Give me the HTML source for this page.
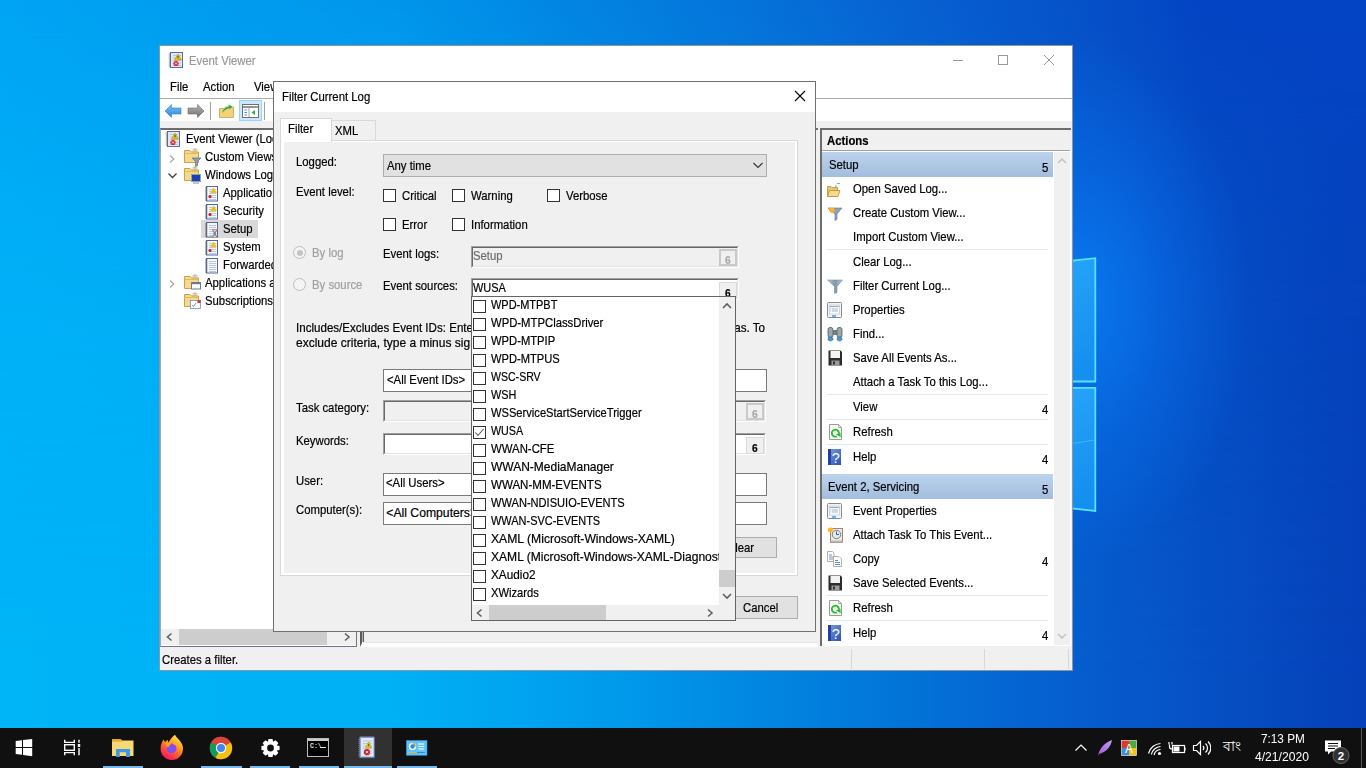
<!DOCTYPE html>
<html><head><meta charset="utf-8">
<style>
*{margin:0;padding:0;box-sizing:border-box}
html,body{width:1366px;height:768px;overflow:hidden}
body{position:relative;font-family:"Liberation Sans",sans-serif;font-size:11.4px;color:#000;
background:linear-gradient(90deg,#00a4f4 0%,#0096ec 29%,#0670d8 57%,#0862d2 66%,#0650c8 80%,#0444c4 88%,#0444c6 100%)}
.a{position:absolute}
.t{position:absolute;font-size:12.2px;line-height:15.5px;margin-left:-.7px;white-space:nowrap;color:#000;transform:scaleX(.93);transform-origin:0 0;-webkit-text-stroke:.2px}
.bx{position:absolute;background:#fff;border:1px solid #7a7a7a}
.sunk{position:absolute;border-top:1px solid #a0a0a0;border-left:1px solid #a0a0a0;border-bottom:1px solid #fff;border-right:1px solid #fff}
.sunk>i{position:absolute;left:0;top:0;right:0;bottom:0;border-top:1px solid #696969;border-left:1px solid #696969;border-bottom:1px solid #e3e3e3;border-right:1px solid #e3e3e3}
.cb{position:absolute;width:13px;height:13px;border:1px solid #333;background:#fff}
.sep{position:absolute;height:1px;background:#e8e8e8}
</style></head><body>

<!-- desktop glow -->
<div class="a" style="left:0;top:0;width:1366px;height:728px;background:linear-gradient(90deg,#00b4f8 0%,#00b0f5 29%,#009cec 44%,#0274d8 66%,#0660d0 77%,#0540b8 100%);-webkit-mask-image:linear-gradient(180deg,transparent 0%,rgba(0,0,0,.55) 27%,rgba(0,0,0,.8) 47%,#000 93%)"></div>
<div class="a" style="left:0;top:0;width:1366px;height:728px;background:radial-gradient(ellipse 170px 260px at 1080px 300px,rgba(10,130,250,.75),rgba(10,120,245,.35) 55%,rgba(10,110,240,0) 100%)"></div>
<!-- windows logo panes -->
<svg class="a" style="left:1050px;top:250px" width="60" height="270"><defs><linearGradient id="lp" x1="0" y1="0" x2="0.3" y2="1"><stop offset="0" stop-color="#28a6fa"/><stop offset="1" stop-color="#1690f0"/></linearGradient></defs><path d="M0 13L45.3 8.2V131.5H0Z" fill="url(#lp)" stroke="#55e2ff" stroke-width="1.8"/><path d="M0 137.8H45.3V261L0 256Z" fill="url(#lp)" stroke="#55e2ff" stroke-width="1.8"/><path d="M0 197L45 190" stroke="#6ad0ff" stroke-width="1" opacity=".5"/></svg>
<!-- ============ EVENT VIEWER WINDOW ============ -->
<div class="a" id="win" style="left:159px;top:45px;width:914px;height:626px;background:#fff;border:1px solid rgba(0,20,50,.45)"></div>
<!-- menu separator -->
<div class="a" style="left:160px;top:98px;width:912px;height:1px;background:#a9a9a9"></div>
<!-- gray client area -->
<div class="a" style="left:160px;top:121px;width:912px;height:549px;background:#f0f0f0"></div>

<!-- tree pane -->
<div class="a" style="left:160px;top:128px;width:197px;height:519px;background:#fff;border-top:2px solid #6d6d6d;border-right:1px solid #6d7585;border-bottom:1px solid #6d7585;border-left:1px solid #a0a8b0"></div>

<!-- middle pane -->
<div class="a" style="left:360px;top:128px;width:458px;height:519px;background:#f0f0f0;border-left:2px solid #5a5a5a;border-top:2px solid #6d6d6d;border-bottom:4px solid #fff"></div>
<div class="a" style="left:362px;top:130px;width:1px;height:512px;background:#b0b0b0"></div>
<div class="a" style="left:363px;top:130px;width:1px;height:512px;background:#5a5a5a"></div>
<div class="a" style="left:364px;top:642px;width:454px;height:1px;background:#e3e3e3"></div>

<!-- actions pane -->
<div class="a" style="left:820px;top:128px;width:251px;height:518px;background:#fff;border-left:2px solid #6d6d6d;border-top:2px solid #6d6d6d"></div>

<!-- status bar -->
<div class="a" style="left:160px;top:647px;width:912px;height:23px;background:#f0f0f0"></div>

<div class="t" style="left:189.5px;top:54px;color:#999">Event Viewer</div>
<div class="a" style="left:953px;top:60px;width:10px;height:1px;background:#999"></div>
<div class="a" style="left:998px;top:55px;width:10px;height:10px;border:1px solid #999"></div>
<svg class="a" style="left:1043px;top:54px" width="12" height="12"><path d="M1 1L11 11M11 1L1 11" stroke="#999" stroke-width="1"/></svg>
<div class="t" style="left:170.5px;top:80px;">File</div>
<div class="t" style="left:204px;top:80px;">Action</div>
<div class="t" style="left:255px;top:80px;">View</div>
<div class="a" style="left:201px;top:220px;width:57px;height:18px;background:#d9d9d9"></div>
<div class="t" style="left:186.6px;top:132px;">Event Viewer (Local)</div>
<div class="t" style="left:205.5px;top:150px;">Custom Views</div>
<div class="t" style="left:205.5px;top:168px;">Windows Logs</div>
<div class="t" style="left:224px;top:186px;">Application</div>
<div class="t" style="left:224px;top:204px;">Security</div>
<div class="t" style="left:224px;top:222px;">Setup</div>
<div class="t" style="left:224px;top:240px;">System</div>
<div class="t" style="left:224px;top:258px;">Forwarded Events</div>
<div class="t" style="left:205.5px;top:276px;">Applications and Services Logs</div>
<div class="t" style="left:205.5px;top:294px;">Subscriptions</div>
<div class="t" style="left:162.6px;top:653px;">Creates a filter.</div>
<div class="a" style="left:851px;top:649px;width:1px;height:20px;background:#d7d7d7"></div>
<div class="a" style="left:984px;top:649px;width:1px;height:20px;background:#d7d7d7"></div>
<div class="a" style="left:1068px;top:649px;width:1px;height:20px;background:#d7d7d7"></div>
<div class="a" style="left:161px;top:629px;width:195px;height:16px;background:#f0f0f0"></div>
<div class="a" style="left:179px;top:629px;width:148px;height:16px;background:#cdcdcd"></div>
<svg class="a" style="left:165px;top:632px" width="10" height="10"><path d="M6.5 1.5L2.5 5L6.5 8.5" stroke="#606060" stroke-width="1.6" fill="none"/></svg>
<svg class="a" style="left:342px;top:632px" width="10" height="10"><path d="M3 1.5L7 5L3 8.5" stroke="#606060" stroke-width="1.6" fill="none"/></svg>
<div class="a" style="left:822px;top:130px;width:249px;height:20px;background:#f0f0f0"></div>
<div class="a" style="left:822px;top:150px;width:248px;height:1px;background:#a0a0a0"></div>
<div class="t" style="left:827.7px;top:134px;font-weight:bold">Actions</div>
<div class="a" style="left:1054px;top:152px;width:16px;height:493px;background:#f0f0f0"></div>
<svg class="a" style="left:1056px;top:156px" width="12" height="10"><path d="M2 7L6 3L10 7" stroke="#c0c0c0" stroke-width="1.4" fill="none"/></svg>
<svg class="a" style="left:1056px;top:631px" width="12" height="10"><path d="M2 3L6 7L10 3" stroke="#c0c0c0" stroke-width="1.4" fill="none"/></svg>
<div class="a" style="left:822px;top:152px;width:231px;height:25px;background:linear-gradient(180deg,#bcd3ec,#a2bddd)"></div>
<div class="t" style="left:829.4px;top:158px;">Setup</div>
<div class="t" style="left:1043px;top:161px;">5</div>
<div class="a" style="left:822px;top:474px;width:231px;height:25px;background:linear-gradient(180deg,#bcd3ec,#a2bddd)"></div>
<div class="t" style="left:829.1px;top:480px;">Event 2, Servicing</div>
<div class="t" style="left:1043px;top:483px;">5</div>
<div class="t" style="left:853.5px;top:182px;">Open Saved Log...</div>
<div class="t" style="left:853.5px;top:206px;">Create Custom View...</div>
<div class="t" style="left:853.5px;top:230px;">Import Custom View...</div>
<div class="t" style="left:853.5px;top:255px;">Clear Log...</div>
<div class="t" style="left:853.5px;top:279px;">Filter Current Log...</div>
<div class="t" style="left:853.5px;top:303px;">Properties</div>
<div class="t" style="left:853.5px;top:327px;">Find...</div>
<div class="t" style="left:853.5px;top:351px;">Save All Events As...</div>
<div class="t" style="left:853.5px;top:375px;">Attach a Task To this Log...</div>
<div class="t" style="left:853.5px;top:400px;">View</div>
<div class="t" style="left:853.5px;top:425px;">Refresh</div>
<div class="t" style="left:853.5px;top:450px;">Help</div>
<div class="t" style="left:853.5px;top:504px;">Event Properties</div>
<div class="t" style="left:853.5px;top:528px;">Attach Task To This Event...</div>
<div class="t" style="left:853.5px;top:552px;">Copy</div>
<div class="t" style="left:853.5px;top:576px;">Save Selected Events...</div>
<div class="t" style="left:853.5px;top:601px;">Refresh</div>
<div class="t" style="left:853.5px;top:626px;">Help</div>
<div class="t" style="left:1042.5px;top:403px;">4</div>
<div class="t" style="left:1042.5px;top:453px;">4</div>
<div class="t" style="left:1042.5px;top:555px;">4</div>
<div class="t" style="left:1042.5px;top:629px;">4</div>
<div class="sep" style="left:827px;top:249px;width:221px"></div>
<div class="sep" style="left:827px;top:394px;width:221px"></div>
<div class="sep" style="left:827px;top:419px;width:221px"></div>
<div class="sep" style="left:827px;top:444px;width:221px"></div>
<div class="sep" style="left:827px;top:595px;width:221px"></div>
<div class="sep" style="left:827px;top:620px;width:221px"></div>
<svg class="a" style="left:168px;top:52px" width="16" height="16"><rect x="2.5" y="0.5" width="12" height="15" fill="#dfe8f5" stroke="#5b6fa0" stroke-width="1"/><path d="M5 3.5H13M5 6H13M5 8.5H13M5 11H13M5 13.5H13" stroke="#a9bde0" stroke-width="0.8"/><path d="M0.8 2H3M0.8 4H3M0.8 6H3M0.8 8H3M0.8 10H3M0.8 12H3M0.8 14H3" stroke="#666" stroke-width="0.9"/><path d="M10 2L13.5 8H6.5Z" fill="#f5c400" stroke="#8a7000" stroke-width="0.4"/><path d="M10 4V6.3" stroke="#333" stroke-width="0.9"/><circle cx="8" cy="11.5" r="2.6" fill="#d8232a"/><path d="M7 10.5L9 12.5M9 10.5L7 12.5" stroke="#fff" stroke-width="0.8"/></svg>
<svg class="a" style="left:165px;top:131px" width="16" height="16"><rect x="2.5" y="0.5" width="12" height="15" fill="#dfe8f5" stroke="#5b6fa0" stroke-width="1"/><path d="M5 3.5H13M5 6H13M5 8.5H13M5 11H13M5 13.5H13" stroke="#a9bde0" stroke-width="0.8"/><path d="M0.8 2H3M0.8 4H3M0.8 6H3M0.8 8H3M0.8 10H3M0.8 12H3M0.8 14H3" stroke="#666" stroke-width="0.9"/><path d="M10 2L13.5 8H6.5Z" fill="#f5c400" stroke="#8a7000" stroke-width="0.4"/><path d="M10 4V6.3" stroke="#333" stroke-width="0.9"/><circle cx="8" cy="11.5" r="2.6" fill="#d8232a"/><path d="M7 10.5L9 12.5M9 10.5L7 12.5" stroke="#fff" stroke-width="0.8"/></svg>
<svg class="a" style="left:203.5px;top:186px" width="16" height="17"><rect x="2.5" y="0.5" width="11" height="14.5" fill="#f4f7fc" stroke="#56689a" stroke-width="1"/><path d="M5 3.5H12M5 5.5H12M5 7.5H12M5 9.5H12M5 11.5H12M5 13.5H12" stroke="#a9bde0" stroke-width="0.8"/><path d="M1 2H3.5M1 4H3.5M1 6H3.5M1 8H3.5M1 10H3.5M1 12H3.5M1 14H3.5" stroke="#666" stroke-width="0.9"/><path d="M9.5 1.5L12.8 7H6.2Z" fill="#f3c300"/><circle cx="6" cy="10.5" r="1.6" fill="#c8202a"/></svg>
<svg class="a" style="left:203.5px;top:204px" width="16" height="17"><rect x="2.5" y="0.5" width="11" height="14.5" fill="#f4f7fc" stroke="#56689a" stroke-width="1"/><path d="M5 3.5H12M5 5.5H12M5 7.5H12M5 9.5H12M5 11.5H12M5 13.5H12" stroke="#a9bde0" stroke-width="0.8"/><path d="M1 2H3.5M1 4H3.5M1 6H3.5M1 8H3.5M1 10H3.5M1 12H3.5M1 14H3.5" stroke="#666" stroke-width="0.9"/><path d="M9.5 1.5L12.8 7H6.2Z" fill="#f3c300"/><circle cx="6" cy="10.5" r="1.6" fill="#c8202a"/></svg>
<svg class="a" style="left:203.5px;top:222px" width="16" height="17"><rect x="2.5" y="0.5" width="11" height="14.5" fill="#f4f7fc" stroke="#56689a" stroke-width="1"/><path d="M5 3.5H12M5 5.5H12M5 7.5H12M5 9.5H12M5 11.5H12M5 13.5H12" stroke="#a9bde0" stroke-width="0.8"/><path d="M1 2H3.5M1 4H3.5M1 6H3.5M1 8H3.5M1 10H3.5M1 12H3.5M1 14H3.5" stroke="#666" stroke-width="0.9"/><path d="M8 7.5H13.5L9.5 11.5L13.5 15.5H8L12 11.5Z" fill="#cfe0f5" stroke="#d6822a" stroke-width="0.8"/><path d="M8.6 8.4L12.9 14.6M12.9 8.4L8.6 14.6" stroke="#3a78c8" stroke-width="0.9"/></svg>
<svg class="a" style="left:203.5px;top:240px" width="16" height="17"><rect x="2.5" y="0.5" width="11" height="14.5" fill="#f4f7fc" stroke="#56689a" stroke-width="1"/><path d="M5 3.5H12M5 5.5H12M5 7.5H12M5 9.5H12M5 11.5H12M5 13.5H12" stroke="#a9bde0" stroke-width="0.8"/><path d="M1 2H3.5M1 4H3.5M1 6H3.5M1 8H3.5M1 10H3.5M1 12H3.5M1 14H3.5" stroke="#666" stroke-width="0.9"/><path d="M9.5 1.5L12.8 7H6.2Z" fill="#f3c300"/><circle cx="6" cy="10.5" r="1.6" fill="#c8202a"/></svg>
<svg class="a" style="left:203.5px;top:258px" width="16" height="17"><rect x="2.5" y="0.5" width="11" height="14.5" fill="#f4f7fc" stroke="#56689a" stroke-width="1"/><path d="M5 3.5H12M5 5.5H12M5 7.5H12M5 9.5H12M5 11.5H12M5 13.5H12" stroke="#a9bde0" stroke-width="0.8"/><path d="M1 2H3.5M1 4H3.5M1 6H3.5M1 8H3.5M1 10H3.5M1 12H3.5M1 14H3.5" stroke="#666" stroke-width="0.9"/></svg>
<svg class="a" style="left:184px;top:148px" width="18" height="19"><path d="M0.5 2.5H6L7.5 4H14.5V14.5H0.5Z" fill="#f6d98d" stroke="#c9a24b" stroke-width="1"/><path d="M0.5 5.5H14.5" stroke="#e0bb62" stroke-width="1"/><path d="M9 1H13V3.5H9Z" fill="#fff" stroke="#c9a24b" stroke-width="0.6"/><path d="M10 2H12" stroke="#3a8ad8" stroke-width="0.8"/><path d="M8 10H17L13.5 13.5V17.5L11.5 18.5V13.5Z" fill="#8aa0b8" stroke="#5d7188" stroke-width="0.7"/></svg>
<svg class="a" style="left:184px;top:166px" width="18" height="19"><path d="M0.5 2.5H6L7.5 4H14.5V14.5H0.5Z" fill="#f6d98d" stroke="#c9a24b" stroke-width="1"/><path d="M0.5 5.5H14.5" stroke="#e0bb62" stroke-width="1"/><path d="M9 1H13V3.5H9Z" fill="#fff" stroke="#c9a24b" stroke-width="0.6"/><path d="M10 2H12" stroke="#3a8ad8" stroke-width="0.8"/><rect x="7.5" y="8.5" width="9" height="7" fill="#1f3fb6" stroke="#8aa" stroke-width="1"/><path d="M9 16.5H15V17.5H9Z" fill="#888"/></svg>
<svg class="a" style="left:184px;top:274px" width="18" height="17"><path d="M0.5 2.5H6L7.5 4H14.5V14.5H0.5Z" fill="#f6d98d" stroke="#c9a24b" stroke-width="1"/><path d="M0.5 5.5H14.5" stroke="#e0bb62" stroke-width="1"/><path d="M9 1H13V3.5H9Z" fill="#fff" stroke="#c9a24b" stroke-width="0.6"/><path d="M10 2H12" stroke="#3a8ad8" stroke-width="0.8"/><rect x="7.5" y="8.5" width="9" height="6.5" fill="#fff" stroke="#6a7a90" stroke-width="1"/><path d="M8 9.5H16" stroke="#6a7a90" stroke-width="1.4"/></svg>
<svg class="a" style="left:184px;top:292px" width="18" height="17"><path d="M0.5 2.5H6L7.5 4H14.5V14.5H0.5Z" fill="#f6d98d" stroke="#c9a24b" stroke-width="1"/><path d="M0.5 5.5H14.5" stroke="#e0bb62" stroke-width="1"/><path d="M9 1H13V3.5H9Z" fill="#fff" stroke="#c9a24b" stroke-width="0.6"/><path d="M10 2H12" stroke="#3a8ad8" stroke-width="0.8"/><rect x="6.5" y="8.5" width="10" height="8" fill="#fff" stroke="#7090c0" stroke-width="0.8"/><path d="M8 13L9.5 14.5L12 11" stroke="#3a78c8" stroke-width="0.8" fill="none"/><rect x="13.5" y="8" width="3" height="3" fill="#e03030"/></svg>
<svg class="a" style="left:167px;top:154px" width="10" height="10"><path d="M3 1.5L6.8 5L3 8.5" stroke="#a6a6a6" stroke-width="1.2" fill="none"/></svg>
<svg class="a" style="left:167px;top:172px" width="11" height="8"><path d="M1.5 1.5L5.5 5.5L9.5 1.5" stroke="#404040" stroke-width="1.3" fill="none"/></svg>
<svg class="a" style="left:167px;top:279px" width="10" height="10"><path d="M3 1.5L6.8 5L3 8.5" stroke="#a6a6a6" stroke-width="1.2" fill="none"/></svg>
<div class="a" style="left:239px;top:100px;width:23px;height:21px;background:#cce8ff;border:1px solid #99d1ff"></div>
<svg class="a" style="left:164px;top:103px" width="18" height="16"><defs><linearGradient id="ba" x1="0" y1="0" x2="0" y2="1"><stop offset="0" stop-color="#7cc4f6"/><stop offset="1" stop-color="#2a86d6"/></linearGradient></defs><path d="M1 8L7.5 1.5V5H17V11H7.5V14.5Z" fill="url(#ba)" stroke="#2f7fc8" stroke-width="0.6"/></svg>
<svg class="a" style="left:187px;top:103px" width="18" height="16"><defs><linearGradient id="fa" x1="0" y1="0" x2="0" y2="1"><stop offset="0" stop-color="#b8b8b8"/><stop offset="1" stop-color="#6e6e6e"/></linearGradient></defs><path d="M17 8L10.5 1.5V5H1V11H10.5V14.5Z" fill="url(#fa)" stroke="#6a6a6a" stroke-width="0.6"/></svg>
<div class="a" style="left:210px;top:102px;width:1px;height:18px;background:#a0a0a0"></div>
<div class="a" style="left:264px;top:102px;width:1px;height:18px;background:#a0a0a0"></div>
<svg class="a" style="left:219px;top:103px" width="16" height="16"><path d="M0.5 5.5H5L6.5 4H14.5V14.5H0.5Z" fill="#f3d27a" stroke="#c9a24b" stroke-width="0.8"/><path d="M3 10C4 6 7 4 10 3.5L9.5 1.5L13.5 3.5L10.5 6.5L10.3 5C8 5.5 5 7.5 3 10Z" fill="#2fa84a"/></svg>
<svg class="a" style="left:242px;top:104px" width="17" height="14"><rect x="0.5" y="0.5" width="16" height="13" fill="#fff" stroke="#707070" stroke-width="1"/><path d="M1 3H16" stroke="#707070" stroke-width="1.5"/><path d="M12 1.7H13M14 1.7H15" stroke="#fff" stroke-width="0.6"/><path d="M7 4V13" stroke="#909090" stroke-width="0.8"/><path d="M2.5 6H5M2.5 8.5H5M2.5 11H5" stroke="#4a8ad8" stroke-width="1"/><path d="M13 6V11L9.5 8.5Z" fill="#2fae3a"/></svg>
<svg class="a" style="left:826px;top:183px" width="16" height="15"><path d="M1.5 3.5H5L6 4.5H11.5V13.5H1.5Z" fill="#e9c46e" stroke="#b88f3a" stroke-width="0.8"/><path d="M1.5 13.5L3.5 7.5H14L12 13.5Z" fill="#f5d98c" stroke="#b88f3a" stroke-width="0.8"/><path d="M9 3H10.5" stroke="#3a8ad8" stroke-width="1"/><path d="M11 0.5H14" stroke="#4ae04a" stroke-width="1"/></svg>
<svg class="a" style="left:827px;top:207px" width="16" height="15"><path d="M1 1H15L10 7V12.5L8 13.5V7Z" fill="#8fa3b8" stroke="#5f7387" stroke-width="0.6"/><path d="M6 1L8 2.5L7 5L4.5 6L3 4.5L1 1Z" fill="#f7a21b"/><circle cx="5" cy="3" r="2.6" fill="#f9b233"/></svg>
<svg class="a" style="left:826.5px;top:278.5px" width="16" height="16"><defs><linearGradient id="fg" x1="0" y1="0" x2="1" y2="0"><stop offset="0" stop-color="#c3d2de"/><stop offset=".5" stop-color="#7e95aa"/><stop offset="1" stop-color="#b8c8d6"/></linearGradient></defs><path d="M0.5 1H15.5L10 7.5V13.5L7.5 14.5V7.5Z" fill="url(#fg)" stroke="#6a7f92" stroke-width="0.5"/></svg>
<svg class="a" style="left:827px;top:302px" width="16" height="16"><rect x="0.5" y="0.5" width="14" height="15" rx="1" fill="#f2f4f8" stroke="#8a8a8a" stroke-width="1"/><rect x="2.5" y="3" width="10" height="9" fill="#fff" stroke="#b0b8c8" stroke-width="0.6"/><path d="M3 4.5H12" stroke="#9aa8c0" stroke-width="1.2"/><path d="M5 7H11M5 9H11" stroke="#8090b0" stroke-width="0.7"/><path d="M3.5 7H4.3M3.5 9H4.3" stroke="#1f9be0" stroke-width="0.8"/><path d="M5 14H9" stroke="#1fa0f0" stroke-width="1.4"/></svg>
<svg class="a" style="left:827px;top:503px" width="16" height="16"><rect x="0.5" y="0.5" width="14" height="15" rx="1" fill="#f2f4f8" stroke="#8a8a8a" stroke-width="1"/><rect x="2.5" y="3" width="10" height="9" fill="#fff" stroke="#b0b8c8" stroke-width="0.6"/><path d="M3 4.5H12" stroke="#9aa8c0" stroke-width="1.2"/><path d="M5 7H11M5 9H11" stroke="#8090b0" stroke-width="0.7"/><path d="M3.5 7H4.3M3.5 9H4.3" stroke="#1f9be0" stroke-width="0.8"/><path d="M5 14H9" stroke="#1fa0f0" stroke-width="1.4"/></svg>
<svg class="a" style="left:827px;top:326px" width="16" height="16"><rect x="1" y="1.5" width="5" height="10" rx="2" fill="#9aa7ad" stroke="#4c5a60" stroke-width="0.8"/><rect x="10" y="1.5" width="5" height="10" rx="2" fill="#9aa7ad" stroke="#4c5a60" stroke-width="0.8"/><rect x="6" y="4" width="4" height="5" fill="#6f7d83"/><ellipse cx="3.5" cy="13" rx="2.6" ry="2" fill="#3aa0e8" stroke="#222" stroke-width="0.6" stroke-dasharray="1 0.6"/><ellipse cx="12.5" cy="13" rx="2.6" ry="2" fill="#3aa0e8" stroke="#222" stroke-width="0.6" stroke-dasharray="1 0.6"/></svg>
<svg class="a" style="left:828px;top:350px" width="15" height="16"><path d="M0.5 0.5H12.5L14 2V15.5H0.5Z" fill="#2c2c2c"/><rect x="2.5" y="1" width="9.5" height="7" fill="#f3f3f3"/><rect x="3.5" y="10.5" width="8" height="5" fill="#9a9a9a"/><rect x="5" y="11.5" width="2" height="3" fill="#333"/></svg>
<svg class="a" style="left:828px;top:575px" width="15" height="16"><path d="M0.5 0.5H12.5L14 2V15.5H0.5Z" fill="#2c2c2c"/><rect x="2.5" y="1" width="9.5" height="7" fill="#f3f3f3"/><rect x="3.5" y="10.5" width="8" height="5" fill="#9a9a9a"/><rect x="5" y="11.5" width="2" height="3" fill="#333"/></svg>
<svg class="a" style="left:829px;top:424px" width="13" height="16"><path d="M0.5 0.5H9.5L12.5 3.5V15.5H0.5Z" fill="#f8f8f8" stroke="#9a9a9a" stroke-width="1"/><path d="M9.5 0.5V3.5H12.5" fill="none" stroke="#9a9a9a" stroke-width="0.8"/><path d="M7.8 12.3A3.5 3.5 0 1 1 9.8 9.6" fill="none" stroke="#28c028" stroke-width="1.9"/><path d="M7 10.5L11.8 13.3L11.3 8.6Z" fill="#28b828"/></svg>
<svg class="a" style="left:829px;top:600px" width="13" height="16"><path d="M0.5 0.5H9.5L12.5 3.5V15.5H0.5Z" fill="#f8f8f8" stroke="#9a9a9a" stroke-width="1"/><path d="M9.5 0.5V3.5H12.5" fill="none" stroke="#9a9a9a" stroke-width="0.8"/><path d="M7.8 12.3A3.5 3.5 0 1 1 9.8 9.6" fill="none" stroke="#28c028" stroke-width="1.9"/><path d="M7 10.5L11.8 13.3L11.3 8.6Z" fill="#28b828"/></svg>
<svg class="a" style="left:828px;top:449px" width="13" height="16"><defs><linearGradient id="hg" x1="0" y1="0" x2="1" y2="1"><stop offset="0" stop-color="#7d9ce8"/><stop offset="1" stop-color="#2a4fb8"/></linearGradient></defs><rect x="0" y="0" width="13" height="16" fill="url(#hg)"/><rect x="0" y="0" width="3" height="16" fill="#2440a0"/><text x="7.8" y="14" font-family="Liberation Sans" font-size="14.5" fill="#fff" text-anchor="middle">?</text></svg>
<svg class="a" style="left:828px;top:625px" width="13" height="16"><defs><linearGradient id="hg" x1="0" y1="0" x2="1" y2="1"><stop offset="0" stop-color="#7d9ce8"/><stop offset="1" stop-color="#2a4fb8"/></linearGradient></defs><rect x="0" y="0" width="13" height="16" fill="url(#hg)"/><rect x="0" y="0" width="3" height="16" fill="#2440a0"/><text x="7.8" y="14" font-family="Liberation Sans" font-size="14.5" fill="#fff" text-anchor="middle">?</text></svg>
<svg class="a" style="left:827px;top:527px" width="16" height="16"><rect x="3.5" y="1.5" width="12" height="14" fill="#efe8e0" stroke="#8a6a5a" stroke-width="0.8"/><rect x="3.5" y="13.5" width="12" height="2" fill="#bbb"/><circle cx="9.5" cy="7.5" r="4.2" fill="#dfeaf2" stroke="#6a7a88" stroke-width="0.9"/><path d="M9.5 4.5V7.5H12" stroke="#333" stroke-width="0.8" fill="none"/><circle cx="3.5" cy="3" r="2.5" fill="#ffc23a"/><path d="M3.5 0V6M0.5 3H6.5M1.5 1L5.5 5M5.5 1L1.5 5" stroke="#ffb000" stroke-width="0.6"/></svg>
<svg class="a" style="left:827px;top:551px" width="16" height="16"><path d="M0.5 0.5H5.5L7 2V10.5H0.5Z" fill="#fff" stroke="#a0a0a0" stroke-width="0.8"/><path d="M2 4H5M2 6H6M2 8H6" stroke="#3a78c8" stroke-width="0.8"/><path d="M6.5 5.5H12L14.5 8V15.5H6.5Z" fill="#fff" stroke="#a0a0a0" stroke-width="0.8"/><path d="M8 9.5H11M8 11.5H13M8 13.5H13" stroke="#3a78c8" stroke-width="0.8"/></svg>
<!-- ============ DIALOG ============ -->
<div class="a" id="dlg" style="left:273px;top:81px;width:543px;height:551px;background:#f0f0f0;border:1px solid #707070"></div>
<div class="a" style="left:274px;top:82px;width:541px;height:30px;background:#fff"></div>

<div class="t" style="left:282.6px;top:90px">Filter Current Log</div>
<svg class="a" style="left:794px;top:90px" width="12" height="12"><path d="M1 1L11 11M11 1L1 11" stroke="#000" stroke-width="1.1"/></svg>
<div class="a" style="left:280px;top:140px;width:518px;height:436px;border:1px solid #d9d9d9;background:#fff"></div>
<div class="a" style="left:331px;top:120px;width:45px;height:21px;background:#f0f0f0;border:1px solid #d9d9d9"></div>
<div class="a" style="left:280px;top:118px;width:52px;height:24px;background:#fff;border:1px solid #d9d9d9;border-bottom:none"></div>
<div class="t" style="left:288.4px;top:121.5px;">Filter</div>
<div class="t" style="left:336px;top:124px;">XML</div>
<div class="a" style="left:283.5px;top:142px;width:511.5px;height:431px;background:#f0f0f0"></div>
<div class="t" style="left:296.4px;top:155px;">Logged:</div>
<div class="a" style="left:383px;top:154px;width:384px;height:23px;background:#e1e1e1;border:1px solid #adadad"></div>
<div class="t" style="left:387.6px;top:159px;">Any time</div>
<svg class="a" style="left:752px;top:161px" width="12" height="9"><path d="M1.5 2L6 6.5L10.5 2" stroke="#333" stroke-width="1.1" fill="none"/></svg>
<div class="t" style="left:296.4px;top:185px;">Event level:</div>
<div class="cb" style="left:383px;top:189px"></div>
<div class="t" style="left:402.5px;top:189px;">Critical</div>
<div class="cb" style="left:452px;top:189px"></div>
<div class="t" style="left:471.5px;top:189px;">Warning</div>
<div class="cb" style="left:547px;top:189px"></div>
<div class="t" style="left:566.5px;top:189px;">Verbose</div>
<div class="cb" style="left:383px;top:218px"></div>
<div class="t" style="left:402.5px;top:218px;">Error</div>
<div class="cb" style="left:452px;top:218px"></div>
<div class="t" style="left:471.5px;top:218px;">Information</div>
<div class="a" style="left:293px;top:246px;width:13px;height:13px;border-radius:50%;border:1px solid #bcbcbc;background:#f4f4f4"></div>
<div class="t" style="left:312.5px;top:245.5px;color:#a0a0a0">By log</div>
<div class="a" style="left:293px;top:278px;width:13px;height:13px;border-radius:50%;border:1px solid #bcbcbc;background:#f4f4f4"></div>
<div class="t" style="left:312.5px;top:277.5px;color:#a0a0a0">By source</div>
<div class="a" style="left:296.5px;top:249.5px;width:6px;height:6px;border-radius:50%;background:#c4c4c4"></div>
<div class="t" style="left:383.4px;top:247px;">Event logs:</div>
<div class="t" style="left:383.4px;top:279px;">Event sources:</div>
<div class="sunk" style="left:471px;top:246px;width:268px;height:22px;background:#f0f0f0"><i></i></div>
<div class="t" style="left:473.6px;top:248.6px;color:#6d6d6d">Setup</div>
<div class="sunk" style="left:471px;top:278px;width:268px;height:22px;background:#fff"><i></i></div>
<div class="t" style="left:473.5px;top:281px;transform:scaleX(.9)">WUSA</div>
<div class="t" style="left:296.7px;top:321px;transform:scaleX(.95)">Includes/Excludes Event IDs: Enter ID numbers and/or ID ranges separated by commas. To</div>
<div class="t" style="left:296.7px;top:336px;transform:scaleX(.985)">exclude criteria, type a minus sign first. For example 1,3,5-99,-76</div>
<div class="bx" style="left:383px;top:369px;width:384px;height:23px"></div>
<div class="t" style="left:387.5px;top:373.2px;">&lt;All Event IDs&gt;</div>
<div class="t" style="left:296.7px;top:401px;">Task category:</div>
<div class="sunk" style="left:383px;top:400px;width:383px;height:22px;background:#f0f0f0"><i></i></div>
<div class="t" style="left:296.7px;top:434px;">Keywords:</div>
<div class="sunk" style="left:383px;top:433px;width:383px;height:22px;background:#fff"><i></i></div>
<div class="t" style="left:296.5px;top:474px;">User:</div>
<div class="bx" style="left:383px;top:473px;width:384px;height:23px"></div>
<div class="t" style="left:387px;top:476.4px;">&lt;All Users&gt;</div>
<div class="t" style="left:296.5px;top:503px;">Computer(s):</div>
<div class="bx" style="left:383px;top:502px;width:384px;height:23px"></div>
<div class="t" style="left:387px;top:505.7px;transform:scaleX(1)">&lt;All Computers&gt;</div>
<div class="a" style="left:701px;top:537px;width:76px;height:21px;background:#e1e1e1;border:1px solid #adadad"></div>
<div class="t" style="left:727.5px;top:541px;">Clear</div>
<div class="a" style="left:640px;top:596px;width:76px;height:23px;background:#e1e1e1;border:1px solid #adadad"></div>
<div class="t" style="left:669px;top:601px;">OK</div>
<div class="a" style="left:722px;top:596px;width:76px;height:23px;background:#e1e1e1;border:1px solid #adadad"></div>
<div class="t" style="left:743.4px;top:601px;">Cancel</div>
<div class="a" style="left:719px;top:249px;width:18px;height:17px;background:#f0f0f0;border:2px solid #c9c9c9;overflow:hidden"><div class="t" style="left:4.5px;top:2px;font-weight:bold;font-size:11px;color:#a8a8a8">6</div></div>
<div class="a" style="left:719px;top:281.5px;width:18px;height:17px;background:#f0f0f0;border:1px solid #dadada;overflow:hidden"><div class="t" style="left:5.5px;top:3.5px;font-weight:bold;font-size:11px;color:#000">6</div></div>
<div class="a" style="left:746px;top:403px;width:18px;height:17px;background:#f0f0f0;border:2px solid #c9c9c9;overflow:hidden"><div class="t" style="left:4.5px;top:2px;font-weight:bold;font-size:11px;color:#a8a8a8">6</div></div>
<div class="a" style="left:746px;top:436.5px;width:18px;height:17px;background:#f0f0f0;border:1px solid #dadada;overflow:hidden"><div class="t" style="left:5.5px;top:3.5px;font-weight:bold;font-size:11px;color:#000">6</div></div>
<!-- list -->
<div class="a" style="left:471px;top:296px;width:265px;height:325px;background:#fff;border:1px solid #646464;overflow:hidden">
<div class="cb" style="left:0.5px;top:2.5px;border-color:#333"></div>
<div class="t" style="left:19.5px;top:0.7px;transform:scaleX(0.899)">WPD-MTPBT</div>
<div class="cb" style="left:0.5px;top:20.5px;border-color:#333"></div>
<div class="t" style="left:19.5px;top:18.7px;transform:scaleX(0.927)">WPD-MTPClassDriver</div>
<div class="cb" style="left:0.5px;top:38.5px;border-color:#333"></div>
<div class="t" style="left:19.5px;top:36.7px;transform:scaleX(0.92)">WPD-MTPIP</div>
<div class="cb" style="left:0.5px;top:56.5px;border-color:#333"></div>
<div class="t" style="left:19.5px;top:54.7px;transform:scaleX(0.915)">WPD-MTPUS</div>
<div class="cb" style="left:0.5px;top:74.5px;border-color:#333"></div>
<div class="t" style="left:19.5px;top:72.7px;transform:scaleX(0.866)">WSC-SRV</div>
<div class="cb" style="left:0.5px;top:92.5px;border-color:#333"></div>
<div class="t" style="left:19.5px;top:90.7px;transform:scaleX(0.892)">WSH</div>
<div class="cb" style="left:0.5px;top:110.5px;border-color:#333"></div>
<div class="t" style="left:19.5px;top:108.7px;transform:scaleX(0.914)">WSServiceStartServiceTrigger</div>
<div class="cb" style="left:0.5px;top:128.5px;border-color:#333"></div>
<svg class="a" style="left:1px;top:128.5px" width="13" height="13"><path d="M2.5 6.5L5 9.5L10.5 3" stroke="#555" stroke-width="1.1" fill="none"/></svg>
<div class="t" style="left:19.5px;top:126.7px;transform:scaleX(0.88)">WUSA</div>
<div class="cb" style="left:0.5px;top:146.5px;border-color:#333"></div>
<div class="t" style="left:19.5px;top:144.7px;transform:scaleX(0.933)">WWAN-CFE</div>
<div class="cb" style="left:0.5px;top:164.5px;border-color:#333"></div>
<div class="t" style="left:19.5px;top:162.7px;transform:scaleX(0.984)">WWAN-MediaManager</div>
<div class="cb" style="left:0.5px;top:182.5px;border-color:#333"></div>
<div class="t" style="left:19.5px;top:180.7px;transform:scaleX(0.948)">WWAN-MM-EVENTS</div>
<div class="cb" style="left:0.5px;top:200.5px;border-color:#333"></div>
<div class="t" style="left:19.5px;top:198.7px;transform:scaleX(0.909)">WWAN-NDISUIO-EVENTS</div>
<div class="cb" style="left:0.5px;top:218.5px;border-color:#333"></div>
<div class="t" style="left:19.5px;top:216.7px;transform:scaleX(0.899)">WWAN-SVC-EVENTS</div>
<div class="cb" style="left:0.5px;top:236.5px;border-color:#333"></div>
<div class="t" style="left:19.5px;top:234.7px;transform:scaleX(0.997)">XAML (Microsoft-Windows-XAML)</div>
<div class="cb" style="left:0.5px;top:254.5px;border-color:#333"></div>
<div class="t" style="left:19.5px;top:252.7px;transform:scaleX(0.99)">XAML (Microsoft-Windows-XAML-Diagnostics)</div>
<div class="cb" style="left:0.5px;top:272.5px;border-color:#333"></div>
<div class="t" style="left:19.5px;top:270.7px;transform:scaleX(0.965)">XAudio2</div>
<div class="cb" style="left:0.5px;top:290.5px;border-color:#333"></div>
<div class="t" style="left:19.5px;top:288.7px;transform:scaleX(0.916)">XWizards</div>
<div class="a" style="left:247px;top:0;width:16px;height:308px;background:#f0f0f0"></div>
<div class="a" style="left:247px;top:273px;width:16px;height:17px;background:#cdcdcd"></div>
<svg class="a" style="left:249px;top:4px" width="12" height="10"><path d="M2 7L6 3L10 7" stroke="#606060" stroke-width="1.6" fill="none"/></svg>
<svg class="a" style="left:249px;top:294px" width="12" height="10"><path d="M2 3L6 7L10 3" stroke="#606060" stroke-width="1.6" fill="none"/></svg>
<div class="a" style="left:0;top:308px;width:263px;height:15px;background:#f0f0f0"></div>
<div class="a" style="left:17px;top:308px;width:117px;height:15px;background:#cdcdcd"></div>
<svg class="a" style="left:3px;top:311px" width="10" height="10"><path d="M6.5 1.5L2.5 5L6.5 8.5" stroke="#606060" stroke-width="1.6" fill="none"/></svg>
<svg class="a" style="left:233px;top:311px" width="10" height="10"><path d="M3 1.5L7 5L3 8.5" stroke="#606060" stroke-width="1.6" fill="none"/></svg>
</div>
<!-- ============ TASKBAR ============ -->
<div class="a" style="left:0;top:728px;width:1366px;height:40px;background:#101010"></div>

<div class="a" style="left:344px;top:728px;width:48px;height:40px;background:#313131"></div>
<div class="a" style="left:103px;top:766px;width:40px;height:2px;background:#76b9ed"></div>
<div class="a" style="left:201px;top:766px;width:41px;height:2px;background:#76b9ed"></div>
<div class="a" style="left:250px;top:766px;width:40px;height:2px;background:#76b9ed"></div>
<div class="a" style="left:299px;top:766px;width:40px;height:2px;background:#76b9ed"></div>
<div class="a" style="left:344px;top:766px;width:48px;height:2px;background:#76b9ed"></div>
<div class="a" style="left:397px;top:766px;width:40px;height:2px;background:#76b9ed"></div>
<svg class="a" style="left:0;top:728px" width="48" height="40"><g fill="#fff"><path d="M15.7 13.1L22 12.2V19H15.7Z"/><path d="M23 12.1L32.2 11V19H23Z"/><path d="M15.7 20H22V26.8L15.7 25.9Z"/><path d="M23 20H32.2V28.2L23 26.9Z"/></g></svg>
<svg class="a" style="left:48px;top:728px" width="48" height="40"><g fill="none" stroke="#fff" stroke-width="1.4"><path d="M16.7 11.8V14.4H26.3V11.8"/><rect x="16.7" y="16.7" width="9.6" height="5.6"/><path d="M16.7 27.2V24.6H26.3V27.2"/><path d="M31 11.8V14.8M31 20V27.2"/></g><rect x="29.8" y="16" width="2.4" height="3" fill="#fff"/></svg>
<svg class="a" style="left:96px;top:728px" width="48" height="40"><path d="M16 11H24.5L26 12.5H37.5V28H16Z" fill="#f8d775"/><path d="M16 11H24.5L26 12.5V13.5H16Z" fill="#e8a820"/><path d="M20 21H34V29H30V24.2H23.7V29H20Z" fill="#3a9ae8"/></svg>
<svg class="a" style="left:144px;top:726.5px" width="48" height="40"><defs><linearGradient id="ff1" x1="0.8" y1="0.1" x2="0.3" y2="1"><stop offset="0" stop-color="#ffe24a"/><stop offset="0.35" stop-color="#ff9a1a"/><stop offset="0.7" stop-color="#ff4a3a"/><stop offset="1" stop-color="#f5136e"/></linearGradient><radialGradient id="ff2" cx="0.45" cy="0.6" r="0.6"><stop offset="0" stop-color="#6f5cf0"/><stop offset="1" stop-color="#9a3ff0"/></radialGradient></defs><path d="M19.5 12.5L21 15L23.5 12.8L24.5 15.5C26 13 28 10 31 7.8C32 10.5 34.5 12 36 14C38 16.5 39 19 39 21.8A11.2 11.2 0 0 1 16.6 21.8C16.6 18 17.8 15 19.5 12.5Z" fill="url(#ff1)"/><circle cx="27.5" cy="21.5" r="4.9" fill="url(#ff2)"/><path d="M21 16.5C23 15.5 26 15.5 28 16.8C26.5 17.5 25 18.5 24.3 20.5C22.5 19.5 21.5 18 21 16.5Z" fill="#ffa21a"/><path d="M29.5 15.5C31 15.5 33 16.5 33.5 18C32 17.5 30.5 17.3 29.5 17.5Z" fill="#ffb02a"/></svg>
<svg class="a" style="left:192px;top:728px" width="48" height="40"><circle cx="29" cy="20" r="11.2" fill="#db4437"/><path d="M29 20L38.7 14.4A11.2 11.2 0 0 1 23.4 29.7Z" fill="#f4c20d"/><path d="M29 20L23.4 29.7A11.2 11.2 0 0 1 19.3 14.4Z" fill="#0f9d58"/><path d="M19.3 14.4A11.2 11.2 0 0 1 29 8.8 L29 14.4Z" fill="#db4437"/><circle cx="29" cy="20" r="5.2" fill="#fff"/><circle cx="29" cy="20" r="4" fill="#4285f4"/></svg>
<svg class="a" style="left:248px;top:728px" width="48" height="40"><polygon points="31.58,17.97 31.58,22.03 28.79,22.59 28.78,22.62 30.35,24.98 27.48,27.85 25.12,26.28 25.09,26.29 24.53,29.08 20.47,29.08 19.91,26.29 19.88,26.28 17.52,27.85 14.65,24.98 16.22,22.62 16.21,22.59 13.42,22.03 13.42,17.97 16.21,17.41 16.22,17.38 14.65,15.02 17.52,12.15 19.88,13.72 19.91,13.71 20.47,10.92 24.53,10.92 25.09,13.71 25.12,13.72 27.48,12.15 30.35,15.02 28.78,17.38 28.79,17.41" fill="#fff"/><circle cx="22.5" cy="20" r="3.4" fill="#101010"/></svg>
<svg class="a" style="left:296px;top:728px" width="48" height="40"><rect x="11.5" y="10.5" width="21" height="18" fill="#000" stroke="#bbb" stroke-width="1"/><rect x="12" y="11" width="20" height="2" fill="#ccc"/><text x="14" y="19.5" font-family="Liberation Mono" font-size="6.5" fill="#ddd" font-weight="bold">C:\</text><rect x="24" y="19" width="6" height="1" fill="#ddd"/></svg>
<svg class="a" style="left:344px;top:728px" width="48" height="40"><rect x="15.5" y="8.8" width="15" height="21" rx="1" fill="#8ea9cf" stroke="#5b6fa0" stroke-width="0.8"/><rect x="17" y="10" width="12.5" height="18.5" fill="#dfe8f5"/><path d="M19 13H28M19 15.5H28M19 18H28M19 20.5H28M19 23H28M19 25.5H28" stroke="#9fb2d6" stroke-width="0.6"/><path d="M24.7 13.8L27.8 19.8H21.6Z" fill="#f0c800" stroke="#a98800" stroke-width="0.5"/><path d="M24.7 16V18.3" stroke="#333" stroke-width="0.8"/><circle cx="23" cy="24.2" r="3.1" fill="#d02028"/><path d="M21.8 23L24.2 25.4M24.2 23L21.8 25.4" stroke="#fff" stroke-width="0.9"/><path d="M15 11V28" stroke="#777" stroke-width="1.2" stroke-dasharray="1 1"/></svg>
<svg class="a" style="left:392px;top:728px" width="48" height="40"><rect x="14.3" y="12.5" width="20.7" height="14.8" fill="#5ec4f7" stroke="#2a8fd8" stroke-width="0.6"/><circle cx="20.5" cy="18.5" r="3.6" fill="#fff"/><path d="M20.5 18.5V14.9A3.6 3.6 0 0 1 24.1 18.5Z" fill="#f7a31a"/><circle cx="20.5" cy="18.5" r="2.2" fill="#2a8fd8"/><path d="M26 16H32M26.5 18.5H32M26.5 21H32" stroke="#fff" stroke-width="1.2"/><path d="M16.5 24.5H25" stroke="#f7b21a" stroke-width="1"/><path d="M25 24.5H33" stroke="#2a8fd8" stroke-width="1"/></svg>
<svg class="a" style="left:1070px;top:728px" width="20" height="40"><path d="M5.5 22.5L11 17L16.5 22.5" stroke="#fff" stroke-width="1.2" fill="none"/></svg>
<svg class="a" style="left:1096px;top:738px" width="18" height="20"><defs><linearGradient id="fe" x1="0" y1="1" x2="1" y2="0"><stop offset="0" stop-color="#9a5cd6"/><stop offset="1" stop-color="#c69bf0"/></linearGradient></defs><path d="M2 18C3 11 8 5 16 2C15 8 11 14 3 16Z" fill="url(#fe)"/></svg>
<svg class="a" style="left:1121px;top:740px" width="16" height="16"><rect x="0.5" y="0.5" width="7.5" height="7.5" fill="#e0392b"/><rect x="8" y="0.5" width="7.5" height="7.5" fill="#4bab3d"/><rect x="0.5" y="8" width="7.5" height="7.5" fill="#3e8ede"/><rect x="8" y="8" width="7.5" height="7.5" fill="#f3c316"/><rect x="0.5" y="0.5" width="15" height="15" fill="none" stroke="#fff" stroke-width="0.6"/><text x="8" y="13" font-family="Liberation Sans" font-size="12" fill="#fff" text-anchor="middle">A</text></svg>
<svg class="a" style="left:1146px;top:740px" width="18" height="18"><g fill="none" stroke="#fff" stroke-width="1.2"><path d="M2.5 13.5A13 13 0 0 1 14.5 3.5"/><path d="M5.3 14.5A10 10 0 0 1 14.5 6.5"/><path d="M8 15A7 7 0 0 1 14.5 9.5"/></g><circle cx="13.5" cy="13.5" r="1.6" fill="#fff"/></svg>
<svg class="a" style="left:1168px;top:740px" width="20" height="16"><g fill="none" stroke="#fff" stroke-width="1.2"><rect x="4.5" y="5.5" width="12" height="7"/><path d="M17 7.5V10.5"/><path d="M1.5 4.5V7C1.5 8.5 3 9 4.5 9"/><path d="M1 2V4.5M4 2V4.5"/></g><rect x="5.5" y="6.5" width="6" height="5" fill="#fff"/></svg>
<svg class="a" style="left:1192px;top:740px" width="19" height="16"><g fill="none" stroke="#fff" stroke-width="1.2"><path d="M1.5 5.5H4.5L8.5 1.5V14.5L4.5 10.5H1.5Z"/><path d="M11 6A3 3 0 0 1 11 10"/><path d="M13.5 3.5A6 6 0 0 1 13.5 12.5"/><path d="M16 1.5A9 9 0 0 1 16 14.5"/></g></svg>
<div class="t" style="left:1223.5px;top:736px;color:#fff;font-size:14px;line-height:20px;transform:none;-webkit-text-stroke:0">বাং</div>
<div class="t" style="left:1261.5px;top:731.5px;color:#fff;transform:scaleX(.965);-webkit-text-stroke:0">7:13 PM</div>
<div class="t" style="left:1256px;top:749.5px;color:#fff;transform:scaleX(.995);-webkit-text-stroke:0">4/21/2020</div>
<svg class="a" style="left:1322px;top:738px" width="30" height="28"><path d="M3 2.5H19V13.5H9L6 16.5V13.5H3Z" fill="#fff"/><path d="M6 5.5H16M6 8H16M6 10.5H13" stroke="#101010" stroke-width="1"/><circle cx="19" cy="17.5" r="8" fill="#303030" stroke="#666" stroke-width="1"/><text x="19" y="21.8" font-family="Liberation Sans" font-size="11.5" font-weight="bold" fill="#fff" text-anchor="middle">2</text></svg>
<div class="a" style="left:1361px;top:728px;width:1px;height:40px;background:#555"></div>
</body></html>
